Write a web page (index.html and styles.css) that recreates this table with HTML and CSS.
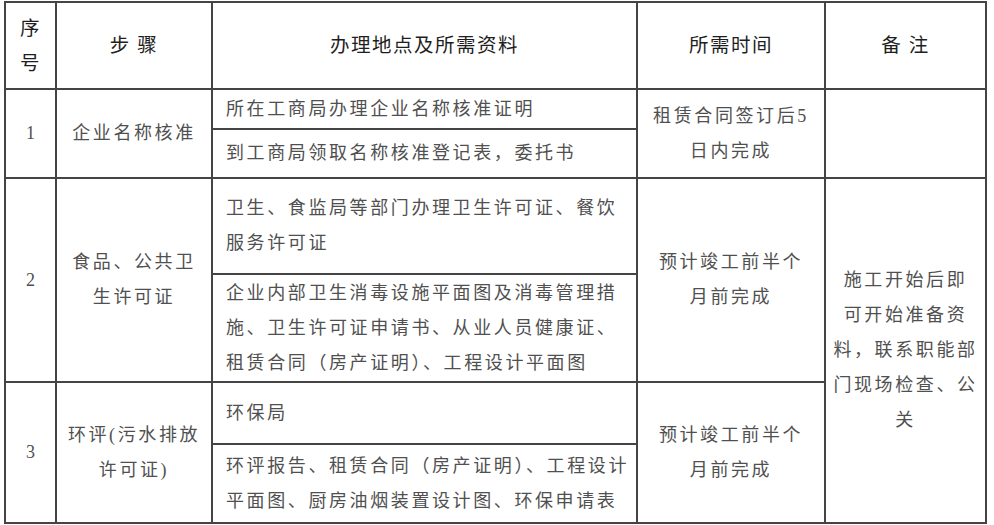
FILE: index.html
```html
<!DOCTYPE html>
<html lang="zh-CN">
<head>
<meta charset="utf-8">
<title>办理流程</title>
<link rel="stylesheet" href="styles.css">
</head>
<body>
<table class="grid">
  <colgroup>
    <col class="c-no">
    <col class="c-step">
    <col class="c-doc">
    <col class="c-time">
    <col class="c-note">
  </colgroup>
  <tr class="r-head">
    <th>序<br>号</th>
    <th>步 骤</th>
    <th>办理地点及所需资料</th>
    <th>所需时间</th>
    <th>备 注</th>
  </tr>
  <tr class="r1a">
    <td class="num" rowspan="2">1</td>
    <td class="step" rowspan="2">企业名称核准</td>
    <td class="doc">所在工商局办理企业名称核准证明</td>
    <td class="time" rowspan="2">租赁合同签订后5<br>日内完成</td>
    <td class="note" rowspan="2"></td>
  </tr>
  <tr class="r1b">
    <td class="doc">到工商局领取名称核准登记表，委托书</td>
  </tr>
  <tr class="r2a">
    <td class="num" rowspan="2">2</td>
    <td class="step" rowspan="2">食品、公共卫<br>生许可证</td>
    <td class="doc">卫生、食监局等部门办理卫生许可证、餐饮<br>服务许可证</td>
    <td class="time" rowspan="2">预计竣工前半个<br>月前完成</td>
    <td class="note" rowspan="4">施工开始后即<br>可开始准备资<br>料，联系职能部<br>门现场检查、公<br>关</td>
  </tr>
  <tr class="r2b">
    <td class="doc">企业内部卫生消毒设施平面图及消毒管理措<br>施、卫生许可证申请书、从业人员健康证、<br>租赁合同（房产证明）、工程设计平面图</td>
  </tr>
  <tr class="r3a">
    <td class="num" rowspan="2">3</td>
    <td class="step" rowspan="2">环评(污水排放<br>许可证)</td>
    <td class="doc">环保局</td>
    <td class="time" rowspan="2">预计竣工前半个<br>月前完成</td>
  </tr>
  <tr class="r3b">
    <td class="doc">环评报告、租赁合同（房产证明）、工程设计<br>平面图、厨房油烟装置设计图、环保申请表</td>
  </tr>
</table>
</body>
</html>
```
FILE: styles.css
```css
html, body {
  margin: 0;
  padding: 0;
  background: #ffffff;
}

.grid {
  border-collapse: collapse;
  table-layout: fixed;
  width: 981px;
  margin: 1px 0 0 4px;
  font-family: "Liberation Serif", "Noto Sans CJK SC", serif;
}

.c-no { width: 51px; }
.c-step { width: 156px; }
.c-doc { width: 425px; }
.c-time { width: 188px; }
.c-note { width: 161px; }

.grid th,
.grid td {
  border: 2px solid #444444;
  padding: 0;
  vertical-align: middle;
  text-align: center;
  white-space: nowrap;
  line-height: 35px;
}

.grid th {
  font-weight: normal;
  font-size: 19.5px;
  letter-spacing: 1.5px;
  color: #1e1e1e;
}

.grid td {
  font-size: 18px;
  letter-spacing: 2.6px;
  color: #505050;
}

.grid td.doc {
  text-align: left;
  padding-left: 13px;
}

.grid td.num {
  letter-spacing: 0;
}

.r-head th { height: 85px; }
.r1a td { height: 38px; }
.r1b td { height: 47px; }
.r2a td { height: 94px; }
.r2b td { height: 106px; }
.r3a td { height: 60px; }
.r3b td { height: 77px; }
```
